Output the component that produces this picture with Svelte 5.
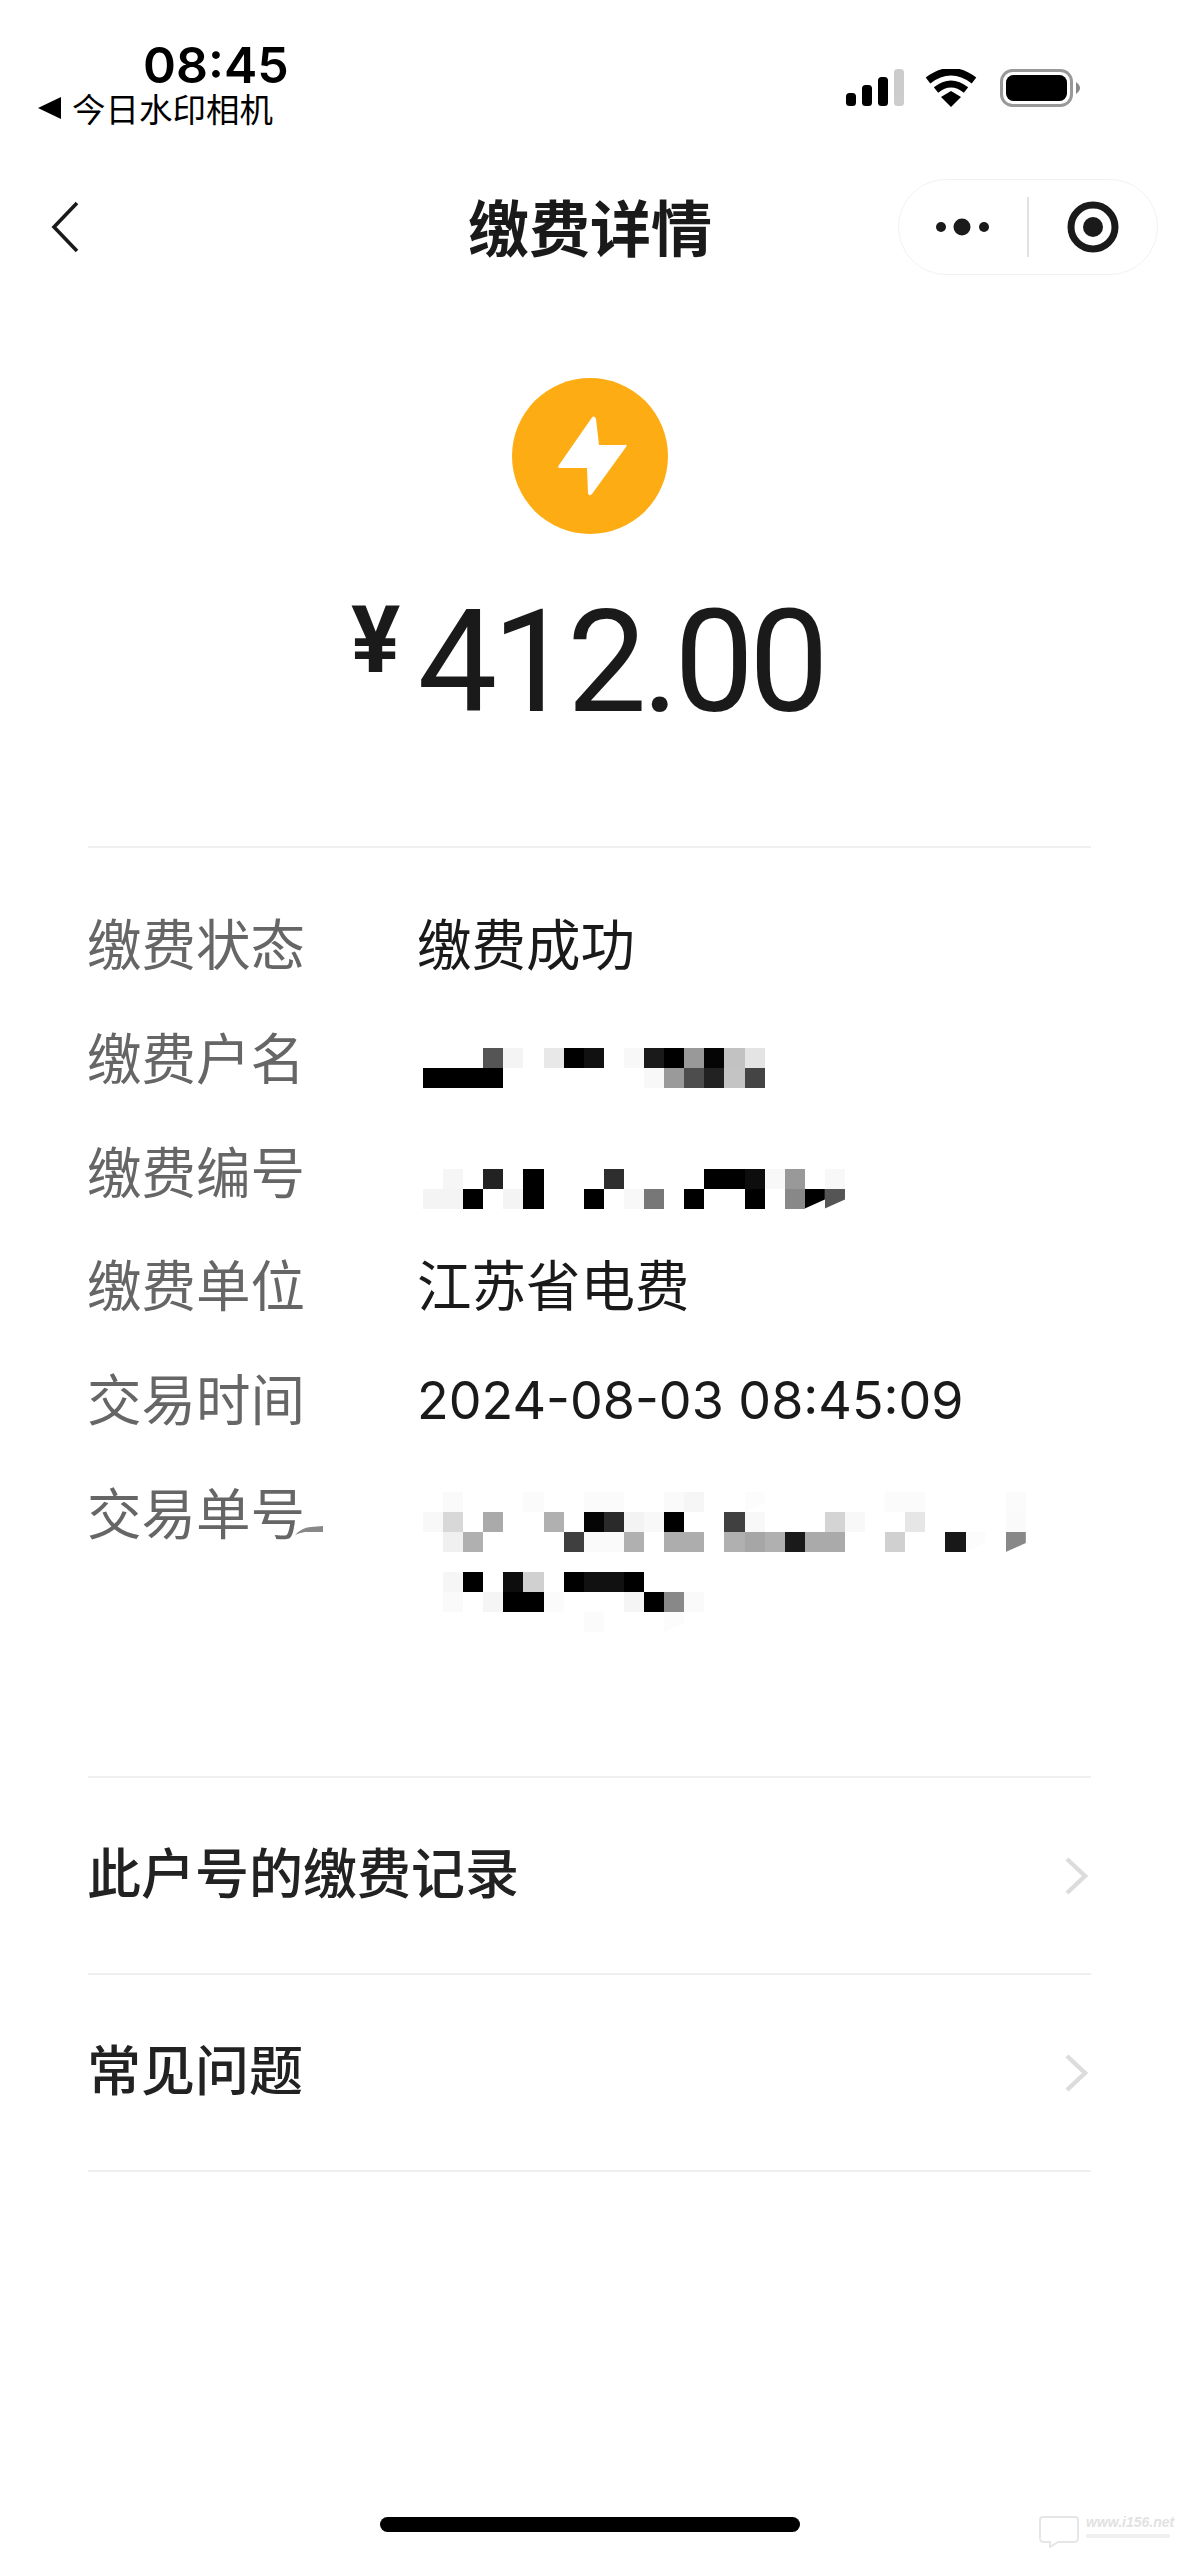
<script>
	// each mosaic row is "column:grey" pairs, blank cells are left out, a trailing c cuts the cell's corner
	const details = [
		{ label: '缴费状态', value: '缴费成功' },
		{
			label: '缴费户名',
			offset: 48,
			mosaic: [
				'3:55 4:f4 6:e8 7:00 8:11 10:f8 11:1a 12:00 13:99 14:05 15:c2 16:e4',
				'0:00 1:00 2:00 3:00 11:f8 12:9a 13:4d 14:22 15:c4 16:44'
			]
		},
		{
			label: '缴费编号',
			offset: 55,
			mosaic: [
				'1:f6 3:22 5:00 9:2e 14:00 15:00 16:0d 17:f8 18:99 20:f8',
				'0:f4 1:f4 2:00 4:f4 5:00 8:00 10:f8 11:77 13:00 16:00 18:88 19:00c 20:55c'
			]
		},
		{ label: '缴费单位', value: '江苏省电费' },
		{ label: '交易时间', value: '2024-08-03 08:45:09', numeric: true },
		{
			label: '交易单号',
			offset: 37,
			smear: true,
			mosaic: [
				'1:fa 5:fb 8:fb 9:fb 12:fa 13:f6 16:fc 23:fb 24:fb 29:fb',
				'0:f8 1:d8 3:aa 6:b0 8:05 9:2a 10:f3 11:f8 12:00 15:40 16:f8 20:d4 21:f8 24:e6 29:fa',
				'1:f0 2:b0 7:3f 8:fa 9:fa 10:b0 12:ad 13:ad 15:b0 16:a6 17:b0 18:1a 19:aa 20:aa 23:d0 26:18 27:fc 29:88c',
				'',
				'1:f6 2:00 4:0d 5:d0 7:00 8:11 9:11 10:00',
				'1:fa 3:f5 4:00 5:00 6:fb 10:f5 11:00 12:88 13:fa',
				'8:fb 12:fc'
			]
		}
	];

	const links = ['此户号的缴费记录', '常见问题'];

	function cells(rows) {
		return rows.flatMap((row, r) =>
			row.split(' ').filter(Boolean).map((pair) => {
				const [col, value] = pair.split(':');
				const grey = value.slice(0, 2);
				return { col: +col + 1, row: r + 1, color: `#${grey}${grey}${grey}`, cut: value.endsWith('c') };
			})
		);
	}
</script>

<div class="page">
	<header class="status">
		<div class="status-left">
			<div class="time">08:45</div>
			<div class="back-app">
				<span class="back-arrow"></span>
				<span>今日水印相机</span>
			</div>
		</div>
		<div class="status-icons">
			<svg class="signal" viewBox="0 0 58 37" width="58" height="37">
				<rect x="0" y="24" width="10" height="13" rx="3.5" fill="#000" />
				<rect x="16" y="16" width="10" height="21" rx="3.5" fill="#000" />
				<rect x="32" y="8" width="10" height="29" rx="3.5" fill="#000" />
				<rect x="48" y="0" width="10" height="37" rx="3.5" fill="#ccc" />
			</svg>
			<svg class="wifi" viewBox="0 0 52 38" width="52" height="38">
				<path d="M3 11.5 Q26 -6 49 11.5" fill="none" stroke="#000" stroke-width="7.5" />
				<path d="M11 21 Q26 9 41 21" fill="none" stroke="#000" stroke-width="7" />
				<path d="M16 28 L26 22 L36 28 L26 38 Z" fill="#000" />
			</svg>
			<svg class="battery" viewBox="0 0 80 38" width="80" height="38">
				<rect x="1.5" y="1.5" width="70" height="35" rx="11" fill="none" stroke="#999" stroke-width="3" />
				<rect x="6" y="6" width="61" height="26" rx="7.5" fill="#000" />
				<path d="M76 13 Q80 16 80 19 Q80 22 76 25 Z" fill="#888" />
			</svg>
		</div>
	</header>

	<nav class="nav">
		<svg class="nav-back" viewBox="0 0 28 52" width="28" height="52">
			<path d="M26 2 L3 26 L26 50" fill="none" stroke="#1a1a1a" stroke-width="3.6" />
		</svg>
		<h1 class="nav-title">缴费详情</h1>
		<div class="capsule">
			<div class="capsule-side">
				<svg viewBox="0 0 60 20" width="60" height="20">
					<circle cx="7" cy="10" r="5" fill="#1a1a1a" />
					<circle cx="28" cy="10" r="8.5" fill="#1a1a1a" />
					<circle cx="50" cy="10" r="5" fill="#1a1a1a" />
				</svg>
			</div>
			<div class="capsule-side">
				<svg viewBox="0 0 52 52" width="52" height="52">
					<circle cx="26" cy="26" r="22" fill="none" stroke="#1a1a1a" stroke-width="7" />
					<circle cx="26" cy="26" r="10" fill="#1a1a1a" />
				</svg>
			</div>
		</div>
	</nav>

	<section class="hero">
		<div class="bolt-badge">
			<svg viewBox="0 0 156 156" width="156" height="156">
				<path
					d="M80 39.5 L47 87 Q45 90 48 90 L75 90 L76 115 Q77 119 80 116 L114 69 Q116 66 112 67 L87 67 L84 41 Q82 37 80 39.5 Z"
					fill="#fff"
				/>
			</svg>
		</div>
		<div class="amount">
			<span class="yen">¥</span>
			<span class="sum">412.00</span>
		</div>
	</section>

	<section class="details">
		{#each details as item}
			<div class="row">
				<div class="label">
					{item.label}
					{#if item.smear}
						<svg class="smear" viewBox="0 0 40 12" width="40" height="12">
							<path d="M0 11 Q8 3 16 3 L28 2 L28 8 L10 8 Q4 9 0 11 Z" fill="#888" />
						</svg>
					{/if}
				</div>
				{#if item.mosaic}
					<div class="mosaic" style="margin-top: {item.offset}px">
						{#each cells(item.mosaic) as cell}
							<i
								class:cut={cell.cut}
								style="grid-column: {cell.col}; grid-row: {cell.row}; background: {cell.color}"
							></i>
						{/each}
					</div>
				{:else}
					<div class="value" class:numeric={item.numeric}>{item.value}</div>
				{/if}
			</div>
		{/each}
	</section>

	<section class="links">
		{#each links as link}
			<div class="link">
				<span>{link}</span>
				<svg viewBox="0 0 24 38" width="24" height="38">
					<path d="M3 2 L21 19 L3 36" fill="none" stroke="#dcdcdc" stroke-width="4.4" />
				</svg>
			</div>
		{/each}
	</section>

	<div class="home-bar"></div>

	<div class="watermark">
		<svg viewBox="0 0 44 34" width="44" height="34">
			<path d="M5 3 H37 Q40 3 40 6 V24 Q40 28 36 28 H20 L12 33 V28 H6 Q2 28 2 24 V6 Q2 3 5 3 Z" fill="none" stroke="#e6e6e6" stroke-width="2" />
		</svg>
		<div class="mark-text">
			<span>www.i156.net</span>
			<div class="mark-sub"></div>
		</div>
	</div>
</div>

<style>
	:global(body) {
		margin: 0;
		background: #fff;
	}

	.page {
		position: relative;
		display: flex;
		flex-direction: column;
		width: 1179px;
		height: 2556px;
		overflow: hidden;
		background: #fff;
		color: #1a1a1a;
		font-family: Roboto, 'Noto Sans CJK SC', sans-serif;
	}

	.status {
		display: flex;
		justify-content: space-between;
		height: 179px;
		box-sizing: border-box;
		padding: 40px 99px 0 38px;
	}

	.time {
		margin-left: 105px;
		font-family: Inter, sans-serif;
		font-size: 50px;
		font-weight: 600;
		line-height: 50px;
		color: #000;
	}

	.back-app {
		display: flex;
		align-items: center;
		gap: 11px;
		margin-top: -2px;
		font-family: 'Noto Sans CJK SC', sans-serif;
		font-size: 33.5px;
		line-height: 40px;
		color: #000;
	}

	.back-arrow {
		width: 0;
		height: 0;
		border-top: 11px solid transparent;
		border-bottom: 11px solid transparent;
		border-right: 23px solid #000;
	}

	.status-icons {
		display: flex;
		align-items: flex-start;
		gap: 21px;
		padding-top: 29px;
	}

	.battery {
		margin-left: 2px;
	}

	.nav {
		display: flex;
		align-items: center;
		justify-content: space-between;
		position: relative;
		height: 96px;
		padding: 0 21px 0 51px;
	}

	.nav-title {
		position: absolute;
		left: 468px;
		margin: -3px 0 0;
		font-family: 'Noto Sans CJK SC', sans-serif;
		font-size: 61px;
		font-weight: 700;
		line-height: 96px;
	}

	.capsule {
		display: flex;
		width: 260px;
		height: 96px;
		box-sizing: border-box;
		border: 1.5px solid #f2f2f2;
		border-radius: 48px;
	}

	.capsule-side {
		display: flex;
		align-items: center;
		justify-content: center;
		flex: 1;
	}

	.capsule-side + .capsule-side {
		position: relative;
	}

	.capsule-side + .capsule-side::before {
		content: '';
		position: absolute;
		left: -1px;
		top: 17px;
		bottom: 17px;
		width: 1.5px;
		background: #e2e2e2;
	}

	.hero {
		display: flex;
		flex-direction: column;
		align-items: center;
		height: 573px;
		box-sizing: border-box;
		padding-top: 103px;
		margin: 0 88px;
		border-bottom: 2px solid #efefef;
	}

	.bolt-badge {
		width: 156px;
		height: 156px;
		border-radius: 50%;
		background: #fdad13;
	}

	.amount {
		display: flex;
		align-items: flex-start;
		gap: 17px;
		margin-top: 52px;
		margin-left: -4px;
		color: #1a1a1a;
	}

	.yen {
		font-size: 92px;
		font-weight: 700;
		line-height: 110px;
	}

	.sum {
		margin-top: 7px;
		font-size: 142px;
		font-weight: 400;
		line-height: 140px;
		letter-spacing: -5px;
	}

	.details {
		height: 928px;
		box-sizing: border-box;
		padding: 38px 88px 0;
	}

	.row {
		display: flex;
		height: 113.8px;
		font-size: 54px;
		line-height: 114px;
		font-family: 'Noto Sans CJK SC', sans-serif;
	}

	.label {
		position: relative;
		flex: 0 0 330px;
		margin: -1px 1px 0 -1px;
		font-size: 54.5px;
		color: #666;
	}

	.smear {
		position: absolute;
		left: 208px;
		top: 70px;
	}

	.value {
		margin-top: 3px;
		margin-left: -1px;
		font-family: Roboto, 'Noto Sans CJK SC', sans-serif;
		font-size: 54.5px;
		color: #1a1a1a;
	}

	.value.numeric {
		font-family: Inter, sans-serif;
		font-size: 52px;
	}

	.mosaic {
		display: grid;
		grid-template-columns: repeat(30, 20.1px);
		grid-auto-rows: 20px;
		margin-left: 5px;
		height: fit-content;
	}

	.mosaic .cut {
		clip-path: polygon(0 0, 100% 0, 100% 55%, 0 100%);
	}

	.links {
		margin: 0 88px;
		border-top: 2px solid #efefef;
	}

	.link {
		display: flex;
		align-items: center;
		justify-content: space-between;
		height: 197px;
		box-sizing: border-box;
		padding-right: 3px;
		border-bottom: 2px solid #efefef;
		font-family: 'Noto Sans CJK SC', sans-serif;
		font-size: 54px;
		font-weight: 500;
		color: #222;
	}

	.link span {
		margin: 0 0 10px -1px;
	}

	.home-bar {
		position: absolute;
		left: 380px;
		top: 2517px;
		width: 420px;
		height: 15px;
		border-radius: 8px;
		background: #000;
	}

	.watermark {
		position: absolute;
		left: 1038px;
		top: 2514px;
		display: flex;
		gap: 4px;
	}

	.mark-text {
		font-family: 'Liberation Sans', sans-serif;
		font-size: 14px;
		font-style: italic;
		font-weight: 700;
		line-height: 16px;
		color: #e2e2e2;
		white-space: nowrap;
	}

	.mark-sub {
		width: 84px;
		height: 4px;
		margin-top: 4px;
		background: #f0f0f0;
	}
</style>
